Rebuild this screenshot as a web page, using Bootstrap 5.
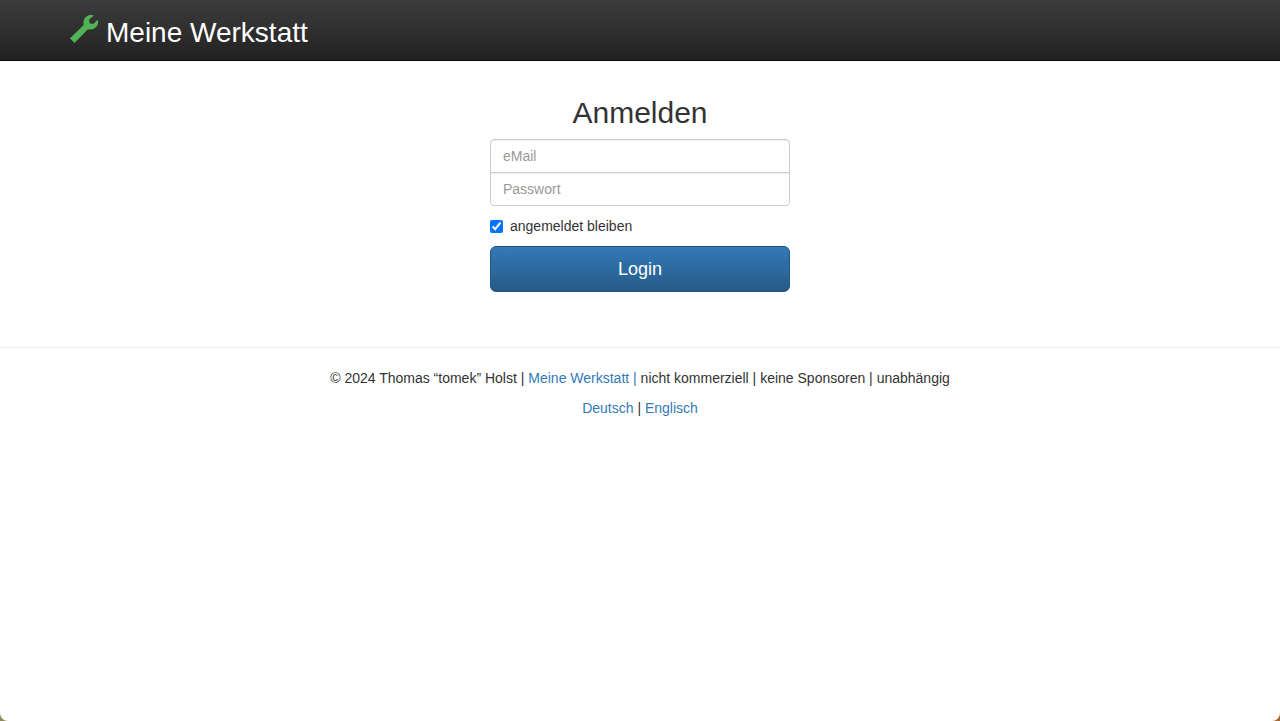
<!DOCTYPE html>
<html lang="de">
<head>
    <meta charset="UTF-8">
    <meta name="viewport" content="width=device-width, initial-scale=1.0">
    <link href="https://cdn.jsdelivr.net/npm/bootstrap@5.3.3/dist/css/bootstrap.min.css" rel="stylesheet">
    <style>
        html { background: linear-gradient(90deg, #8f8a5a 0%, #a8682c 100%); height: 100%; }
        body {
            font-family: "Liberation Sans", Arial, sans-serif;
            font-size: 14px;
            line-height: 20px;
            color: #333;
            min-height: 100vh;
            overflow: hidden;
            border-radius: 0 0 8px 8px;
        }
        .top-bar {
            height: 61px;
            padding: 0 70px;
            background: linear-gradient(to bottom, #3c3c3c 0%, #222 100%);
            border-bottom: 1px solid #080808;
        }
        .brand-link { font-size: 28px; line-height: 1; color: #fff; text-decoration: none; }
        .brand-icon { margin-bottom: 2px; }
        .brand-name { padding-top: 5px; }
        .login-box { width: 300px; padding-top: 35px; height: 286px; }
        .login-title { font-size: 30px; line-height: 33px; font-weight: 400; color: #333; margin-bottom: 10px; }
        .login-input {
            height: 34px;
            padding: 6px 12px;
            font-size: 14px;
            line-height: 20px;
            border-color: #ccc;
            border-radius: 4px;
            color: #555;
            box-shadow: inset 0 1px 1px rgba(0, 0, 0, .075);
        }
        .login-input::placeholder { color: #999; }
        .input-first { border-bottom-left-radius: 0; border-bottom-right-radius: 0; margin-bottom: -1px; }
        .input-last { border-top-left-radius: 0; border-top-right-radius: 0; }
        .stay-row { margin: 10px 0 10px; height: 20px; }
        .stay-row input { width: 13px; height: 13px; margin: 0 7px 0 0; accent-color: #0075ff; }
        .login-btn {
            height: 46px;
            font-size: 18px;
            color: #fff;
            border: 1px solid #245580;
            border-radius: 6px;
            background: linear-gradient(to bottom, #337ab7 0%, #265a88 100%);
        }
        .page-foot { border-top: 1px solid #eee; padding-top: 20px; }
        .page-foot p { margin-bottom: 10px; }
        .page-foot a { color: #337ab7; text-decoration: none; }
    </style>
    <title>Meine Werkstatt</title>
</head>
<body class="bg-white">
    <nav class="top-bar d-flex align-items-center">
        <a class="brand-link d-flex align-items-center gap-2" href="#">
            <svg class="brand-icon" width="28" height="28" viewBox="0 0 29 29" aria-hidden="true">
                <path fill="#52b356" d="M0 24.2 14.2 10.4C13.4 7.2 14.2 4.2 16.4 2 18.8-0.2 21.8-0.6 24.6 0.4L19.8 4.8 20.2 8.6 24 9.2 28.8 4.8C29.6 7.8 28.8 10.8 26.8 12.8 24.6 15 21.6 15.6 18.6 14.8L4.6 29Z"/>
            </svg>
            <span class="brand-name">Meine Werkstatt</span>
        </a>
    </nav>

    <main class="login-box mx-auto">
        <h2 class="login-title text-center">Anmelden</h2>
        <form>
            <input type="email" class="form-control login-input input-first" placeholder="eMail">
            <input type="password" class="form-control login-input input-last" placeholder="Passwort">
            <label class="stay-row d-flex align-items-center">
                <input type="checkbox" checked>
                angemeldet bleiben
            </label>
            <button type="button" class="btn login-btn w-100">Login</button>
        </form>
    </main>

    <footer class="page-foot text-center">
        <p>© 2024 Thomas “tomek” Holst | <a href="#">Meine Werkstatt |</a> nicht kommerziell | keine Sponsoren | unabhängig</p>
        <p><a href="#">Deutsch</a> | <a href="#">Englisch</a></p>
    </footer>

    <script src="https://cdn.jsdelivr.net/npm/bootstrap@5.3.3/dist/js/bootstrap.bundle.min.js"></script>
</body>
</html>
